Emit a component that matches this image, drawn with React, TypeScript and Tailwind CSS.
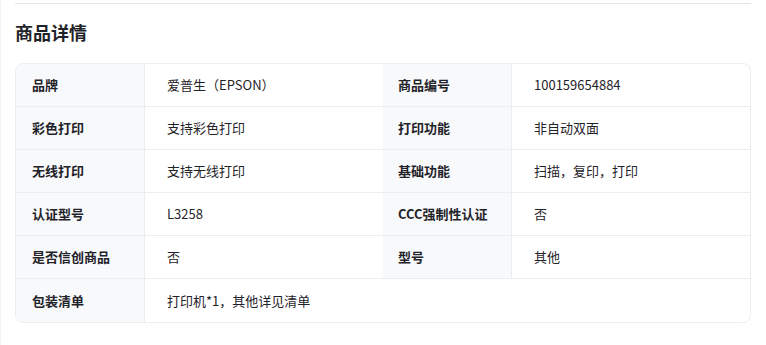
const rows: [string, string, string?, string?][] = [
  ["品牌", "爱普生（EPSON）", "商品编号", "100159654884"],
  ["彩色打印", "支持彩色打印", "打印功能", "非自动双面"],
  ["无线打印", "支持无线打印", "基础功能", "扫描，复印，打印"],
  ["认证型号", "L3258", "CCC强制性认证", "否"],
  ["是否信创商品", "否", "型号", "其他"],
  ["包装清单", "打印机*1，其他详见清单"],
];

export default function App() {
  return (
    <div
      className="w-[766px] h-[345px] bg-white border-l border-[#f2f3f5] overflow-hidden"
      style={{ fontFamily: '"Noto Sans CJK SC", "Noto Sans", sans-serif' }}
    >
      <div className="ml-[14px] mr-[15px] mt-[3px] h-px bg-[#e5e6e8]" />
      <h2 className="ml-[14px] mt-[15px] text-[18px] leading-[26px] font-bold text-[#1f2329]">
        商品详情
      </h2>
      <div className="ml-[14px] mt-[18px] w-[736px] rounded-lg border border-[#ebedf0] overflow-hidden text-[13px] text-[#1f2329]">
        {rows.map(([l1, v1, l2, v2], i) => (
          <div
            key={l1}
            className={`grid grid-cols-[129px_238px_129px_1fr] h-[43px] ${
              i < rows.length - 1 ? "border-b border-[#ebedf0]" : ""
            }`}
          >
            <div className="flex items-center pl-4 bg-[#f8f9fb] border-r border-[#ebedf0] font-semibold">
              {l1}
            </div>
            {l2 ? (
              <>
                <div className="flex items-center pl-[22px]">{v1}</div>
                <div className="flex items-center pl-[15px] bg-[#f8f9fb] border-r border-[#ebedf0] font-semibold">
                  {l2}
                </div>
                <div className="flex items-center pl-[22px]">{v2}</div>
              </>
            ) : (
              <div className="col-span-3 flex items-center pl-[22px]">{v1}</div>
            )}
          </div>
        ))}
      </div>
    </div>
  );
}
